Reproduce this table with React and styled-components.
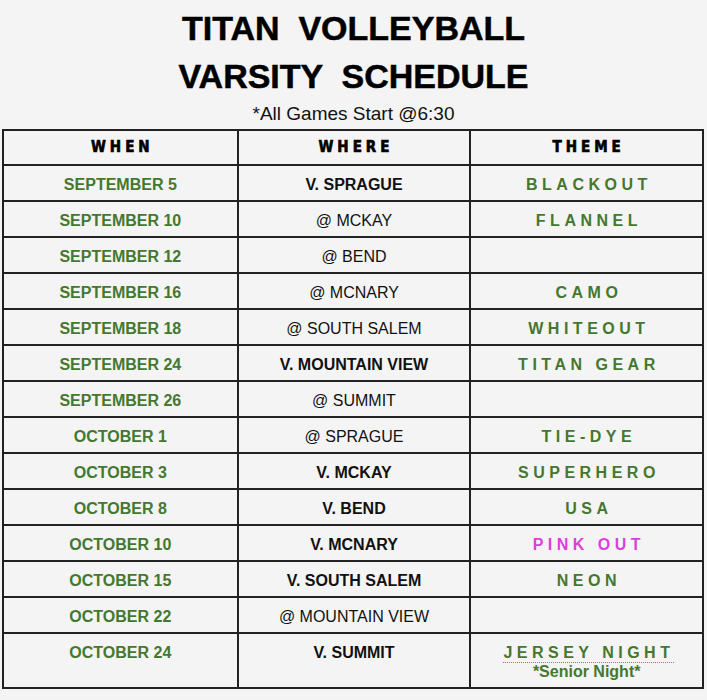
import React from 'react';
import styled, { createGlobalStyle } from 'styled-components';

const GlobalStyle = createGlobalStyle`
  html, body {
    margin: 0;
    padding: 0;
    background: #f4f4f4;
  }
  body {
    font-family: "Liberation Sans", Arial, sans-serif;
    color: #111;
  }
`;

// Расписание игр
const games = [
  { when: 'SEPTEMBER 5', where: 'V. SPRAGUE', home: true, theme: 'BLACKOUT' },
  { when: 'SEPTEMBER 10', where: '@ MCKAY', theme: 'FLANNEL' },
  { when: 'SEPTEMBER 12', where: '@ BEND' },
  { when: 'SEPTEMBER 16', where: '@ MCNARY', theme: 'CAMO' },
  { when: 'SEPTEMBER 18', where: '@ SOUTH SALEM', theme: 'WHITEOUT' },
  { when: 'SEPTEMBER 24', where: 'V. MOUNTAIN VIEW', home: true, theme: 'TITAN GEAR' },
  { when: 'SEPTEMBER 26', where: '@ SUMMIT' },
  { when: 'OCTOBER 1', where: '@ SPRAGUE', theme: 'TIE-DYE' },
  { when: 'OCTOBER 3', where: 'V. MCKAY', home: true, theme: 'SUPERHERO' },
  { when: 'OCTOBER 8', where: 'V. BEND', home: true, theme: 'USA' },
  { when: 'OCTOBER 10', where: 'V. MCNARY', home: true, theme: 'PINK OUT', pink: true },
  { when: 'OCTOBER 15', where: 'V. SOUTH SALEM', home: true, theme: 'NEON' },
  { when: 'OCTOBER 22', where: '@ MOUNTAIN VIEW' },
  { when: 'OCTOBER 24', where: 'V. SUMMIT', home: true, theme: 'JERSEY NIGHT', note: '*Senior Night*', tall: true },
];

const App = () => {
  return (
    <Page>
      <GlobalStyle />
      <Title>
        <TitleLine>TITAN  VOLLEYBALL</TitleLine>
        <TitleLine>VARSITY  SCHEDULE</TitleLine>
      </Title>
      <Subtitle>*All Games Start @6:30</Subtitle>
      <Table>
        <HeaderRow>
          <HeadCell>WHEN</HeadCell>
          <HeadCell>WHERE</HeadCell>
          <HeadCell>THEME</HeadCell>
        </HeaderRow>
        {games.map((game, index) => (
          <Row key={game.when} $tall={game.tall} $last={index === games.length - 1}>
            <Cell>
              <DateText>{game.when}</DateText>
            </Cell>
            <Cell>
              <PlaceText $home={game.home}>{game.where}</PlaceText>
            </Cell>
            <Cell>
              {game.theme && (
                <ThemeText $pink={game.pink} $marked={!!game.note}>
                  {game.theme}
                </ThemeText>
              )}
              {game.note && <NoteText>{game.note}</NoteText>}
            </Cell>
          </Row>
        ))}
      </Table>
    </Page>
  );
};

const Page = styled.div`
  width: 707px;
  min-height: 700px;
  padding-top: 4px;
  box-sizing: border-box;
`;

const Title = styled.h1`
  margin: 0;
  font-family: "Liberation Sans", Arial, sans-serif;
  font-weight: 700;
  font-size: 34px;
  line-height: 48px;
  text-align: center;
  color: #000;
  -webkit-text-stroke: 0.5px #000;
`;

const TitleLine = styled.div`
  white-space: pre;
`;

const Subtitle = styled.p`
  margin: 3px 0 4px;
  font-family: "Liberation Sans", Arial, sans-serif;
  font-size: 19px;
  line-height: 22px;
  text-align: center;
  color: #111;
`;

const Table = styled.div`
  margin-left: 2px;
  width: 702px;
  box-sizing: border-box;
  border: 2px solid #222;
`;

const HeaderRow = styled.div`
  display: grid;
  grid-template-columns: 1fr 1fr 1fr;
  height: 33px;
  border-bottom: 2px solid #222;
`;

const Row = styled.div`
  display: grid;
  grid-template-columns: 1fr 1fr 1fr;
  height: ${(p) => (p.$tall ? '53px' : '34px')};
  border-bottom: ${(p) => (p.$last ? 'none' : '2px solid #222')};
`;

const Cell = styled.div`
  display: flex;
  flex-direction: column;
  align-items: center;
  padding-top: 10px;
  border-left: 2px solid #222;
  box-sizing: border-box;
  min-width: 0;

  &:first-child {
    border-left: none;
  }
`;

const HeadCell = styled(Cell)`
  padding-top: 7px;
  padding-left: 4px;
  font-family: "DejaVu Sans", sans-serif;
  font-stretch: condensed;
  font-weight: 900;
  font-size: 15px;
  line-height: 18px;
  letter-spacing: 4px;
  color: #000;
  -webkit-text-stroke: 0.6px #000;
`;

const DateText = styled.span`
  font-weight: 700;
  font-size: 16px;
  line-height: 18px;
  color: #44782f;
`;

const PlaceText = styled.span`
  font-weight: ${(p) => (p.$home ? 700 : 400)};
  font-size: 16px;
  line-height: 18px;
  color: #111;
`;

const ThemeText = styled.span`
  font-weight: 700;
  font-size: 16px;
  line-height: 18px;
  letter-spacing: 4.5px;
  padding-left: 4.5px;
  color: ${(p) => (p.$pink ? '#dd3fdc' : '#44782f')};
  text-decoration: ${(p) => (p.$marked ? 'underline dotted #e05a5a' : 'none')};
  text-underline-offset: 4px;
  text-decoration-thickness: 1px;
`;

const NoteText = styled.span`
  font-weight: 700;
  font-size: 16px;
  line-height: 19px;
  color: #44782f;
`;

export default App;
